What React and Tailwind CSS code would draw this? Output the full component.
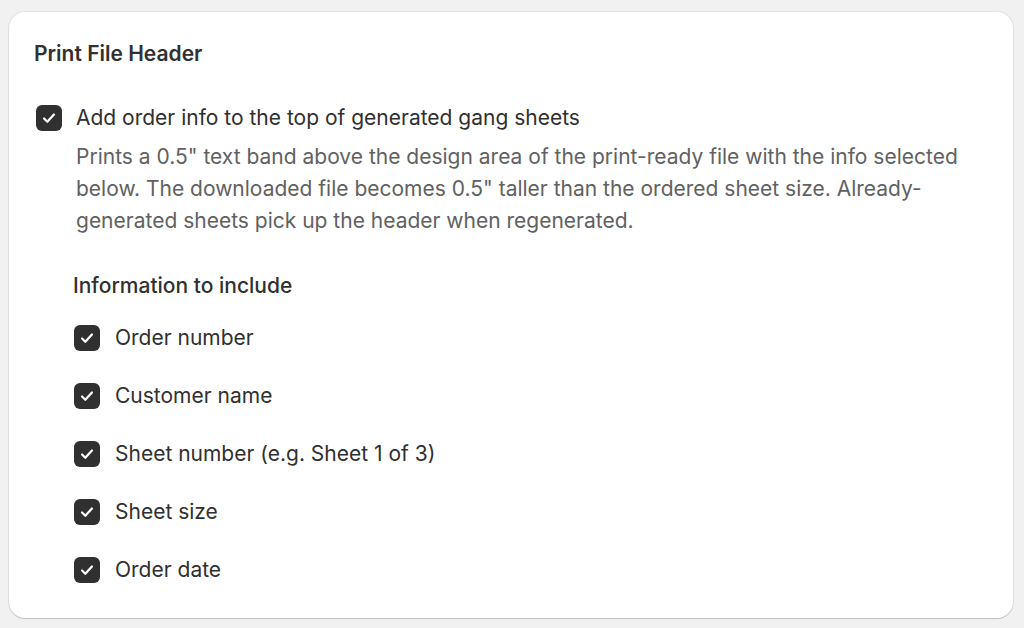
const items = [
  'Order number',
  'Customer name',
  'Sheet number (e.g. Sheet 1 of 3)',
  'Sheet size',
  'Order date',
]

function Check() {
  return (
    <span className="flex h-[26px] w-[26px] shrink-0 items-center justify-center rounded-[6px] bg-[#303030]">
      <svg className="h-[18px] w-[18px]" viewBox="0 0 16 16" fill="none">
        <path d="M3.6 8.5l2.9 2.8 5.9-6.4" stroke="white" strokeWidth="2" strokeLinecap="round" strokeLinejoin="round" />
      </svg>
    </span>
  )
}

export default function App() {
  return (
    <div className="min-h-screen bg-[#f1f1f1] pt-[12px] pl-[9px] pr-[11px] pb-[11px] font-['Inter',sans-serif] text-[21px] leading-[32px] text-[#303030]">
      <div className="rounded-[16px] bg-white px-[25px] pt-[25px] pb-[32px] shadow-[0_1px_1px_rgba(0,0,0,0.16),0_0_0_1px_rgba(0,0,0,0.06)]">
        <h2 className="pt-[1px] font-semibold">Print File Header</h2>

        <div className="mt-[32px] flex items-center gap-[14px] pl-[2px]">
          <Check />
          <span>Add order info to the top of generated gang sheets</span>
        </div>
        <p className="mt-[7px] pl-[42px] text-[#616161]">
          Prints a 0.5" text band above the design area of the print-ready file with the info selected below. The downloaded file becomes 0.5" taller than the ordered sheet size. Already-generated sheets pick up the header when regenerated.
        </p>

        <div className="mt-[33px] pl-[39px]">
          <h3 className="font-medium">Information to include</h3>
          <div className="mt-[19px] flex flex-col gap-[26px] pt-[1px]">
            {items.map((item) => (
              <div key={item} className="flex items-center gap-[15px] pl-[1px]">
                <Check />
                <span>{item}</span>
              </div>
            ))}
          </div>
        </div>
      </div>
    </div>
  )
}
